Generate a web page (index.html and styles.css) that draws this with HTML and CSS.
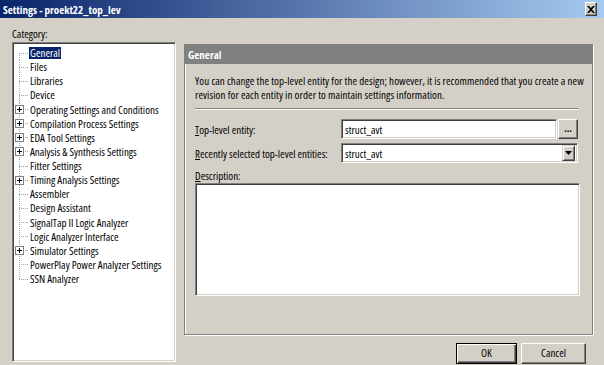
FILE: index.html
```html
<!DOCTYPE html>
<html>
<head>
  <title>Settings - proekt22_top_lev</title>
  <link rel="stylesheet" href="styles.css">
</head>
<body>
  <div class="window">
    <div class="titlebar">
      <span class="title">Settings - proekt22_top_lev</span>
      <div class="close-btn">
        <svg width="8" height="7" viewBox="0 0 8 7">
          <path d="M0 0h2l2 2 2-2h2L5 3.5 8 7H6L4 5 2 7H0l3-3.5z" fill="#000"/>
        </svg>
      </div>
    </div>
    <div class="dialog">
      <div class="left">
        <div class="caption">Category:</div>
        <div class="tree">
          <div class="row first"><span class="twig"></span><span class="label selected">General</span></div>
          <div class="row"><span class="twig"></span><span class="label">Files</span></div>
          <div class="row"><span class="twig"></span><span class="label">Libraries</span></div>
          <div class="row"><span class="twig"></span><span class="label">Device</span></div>
          <div class="row"><span class="twig"><span class="plus"></span></span><span class="label">Operating Settings and Conditions</span></div>
          <div class="row"><span class="twig"><span class="plus"></span></span><span class="label">Compilation Process Settings</span></div>
          <div class="row"><span class="twig"><span class="plus"></span></span><span class="label">EDA Tool Settings</span></div>
          <div class="row"><span class="twig"><span class="plus"></span></span><span class="label">Analysis &amp; Synthesis Settings</span></div>
          <div class="row"><span class="twig"></span><span class="label">Fitter Settings</span></div>
          <div class="row"><span class="twig"><span class="plus"></span></span><span class="label">Timing Analysis Settings</span></div>
          <div class="row"><span class="twig"></span><span class="label">Assembler</span></div>
          <div class="row"><span class="twig"></span><span class="label">Design Assistant</span></div>
          <div class="row"><span class="twig"></span><span class="label">SignalTap II Logic Analyzer</span></div>
          <div class="row"><span class="twig"></span><span class="label">Logic Analyzer Interface</span></div>
          <div class="row"><span class="twig"><span class="plus"></span></span><span class="label">Simulator Settings</span></div>
          <div class="row"><span class="twig"></span><span class="label">PowerPlay Power Analyzer Settings</span></div>
          <div class="row last"><span class="twig"></span><span class="label">SSN Analyzer</span></div>
        </div>
      </div>
      <div class="right">
        <div class="group">
          <div class="group-header">General</div>
          <div class="group-body">
            <p class="intro">You can change the top-level entity for the design; however, it is recommended that you create a new<br>revision for each entity in order to maintain settings information.</p>
            <div class="separator"></div>
            <div class="field">
              <span class="field-label"><u>T</u>op-level entity:</span>
              <div class="textbox">struct_avt</div>
              <div class="browse-btn">...</div>
            </div>
            <div class="field">
              <span class="field-label"><u>R</u>ecently selected top-level entities:</span>
              <div class="combo">
                <span class="combo-text">struct_avt</span>
                <span class="combo-arrow">
                  <svg width="7" height="4" viewBox="0 0 7 4"><path d="M0 0h7L3.5 4z" fill="#000"/></svg>
                </span>
              </div>
            </div>
            <div class="desc-label"><u>D</u>escription:</div>
            <div class="textarea"></div>
          </div>
        </div>
        <div class="buttons">
          <div class="btn default">OK</div>
          <div class="btn cancel">Cancel</div>
        </div>
      </div>
    </div>
  </div>
</body>
</html>
```

FILE: styles.css
```css
:root {
  --face: #d4d0c8;
  --shadow: #808080;
  --dark: #404040;
  --light: #fff;
  --select: #0a246a;
}

body {
  margin: 0;
  padding: 0;
  background: var(--face);
  color: #000;
  font-family: 'Open Sans', 'DejaVu Sans Condensed', sans-serif;
  font-stretch: 75%;
  font-size: 11px;
  overflow: hidden;
}

.window {
  width: 604px;
  height: 365px;
  display: flex;
  flex-direction: column;
  overflow: hidden;
}

.titlebar {
  height: 18px;
  display: flex;
  align-items: center;
  padding-left: 3px;
  background: linear-gradient(to right, #0a246a, #a6caf0);
  color: #fff;
  flex-shrink: 0;
}

.title {
  font-weight: bold;
}

.close-btn {
  margin-left: auto;
  margin-right: 7px;
  width: 10px;
  height: 12px;
  display: flex;
  align-items: center;
  justify-content: center;
  background: var(--face);
  border: 1px solid;
  border-color: var(--light) var(--dark) var(--dark) var(--light);
  box-shadow: inset -1px -1px var(--shadow);
}

.dialog {
  display: flex;
  padding: 9px 0 0 12px;
}

.left {
  width: 164px;
  display: flex;
  flex-direction: column;
}

.caption {
  line-height: 13px;
  height: 13px;
  margin-bottom: 2px;
}

/* sunken white list box */
.tree {
  height: 320px;
  box-sizing: border-box;
  background: #fff;
  border: 1px solid;
  border-color: var(--shadow) var(--light) var(--light) var(--shadow);
  box-shadow: inset 1px 1px var(--dark), inset -1px -1px var(--face);
  padding: 3px 1px 0 1px;
}

.row {
  display: flex;
  align-items: center;
  height: 14.13px;
  white-space: nowrap;
}

.twig {
  width: 15px;
  height: 100%;
  flex-shrink: 0;
  display: flex;
  align-items: center;
  background:
    repeating-linear-gradient(to bottom, #a0a0a0 0 1px, transparent 1px 2px) 5px 0 / 1px 100% no-repeat,
    repeating-linear-gradient(to right, #a0a0a0 0 1px, transparent 1px 2px) 5px 50% / 9px 1px no-repeat;
}

.row.first .twig {
  background:
    repeating-linear-gradient(to bottom, #a0a0a0 0 1px, transparent 1px 2px) 5px 100% / 1px 50% no-repeat,
    repeating-linear-gradient(to right, #a0a0a0 0 1px, transparent 1px 2px) 5px 50% / 9px 1px no-repeat;
}

.row.last .twig {
  background:
    repeating-linear-gradient(to bottom, #a0a0a0 0 1px, transparent 1px 2px) 5px 0 / 1px 50% no-repeat,
    repeating-linear-gradient(to right, #a0a0a0 0 1px, transparent 1px 2px) 5px 50% / 9px 1px no-repeat;
}

.plus {
  width: 7px;
  height: 7px;
  margin-left: 1px;
  border: 1px solid var(--shadow);
  background:
    linear-gradient(#000, #000) center / 5px 1px no-repeat,
    linear-gradient(#000, #000) center / 1px 5px no-repeat,
    #fff;
}

.label {
  padding: 0 1px;
  line-height: 12px;
}

.label.selected {
  background: var(--select);
  color: #fff;
}

.right {
  margin-left: 8px;
  padding-top: 17px;
  width: 409px;
  display: flex;
  flex-direction: column;
}

/* etched frame */
.group {
  height: 291px;
  box-sizing: border-box;
  border: 1px solid var(--shadow);
  box-shadow: inset 1px 1px var(--light), 1px 1px 0 var(--light);
}

.group-header {
  background: var(--shadow);
  color: #fff;
  font-weight: bold;
  height: 19px;
  line-height: 19px;
  padding-left: 3px;
}

.group-body {
  padding: 0 9px 0 10px;
}

.intro {
  margin: 10px 0 0 0;
  line-height: 14px;
  letter-spacing: 0.08px;
  white-space: nowrap;
}

.separator {
  margin-top: 6px;
  height: 1px;
  background: var(--shadow);
  border-bottom: 1px solid var(--light);
  margin-right: 5px;
}

.field {
  display: flex;
  align-items: center;
  margin-top: 4px;
}

.separator + .field {
  margin-top: 9px;
}

.field-label {
  width: 146px;
  flex-shrink: 0;
  white-space: nowrap;
}

.textbox,
.combo {
  height: 20px;
  box-sizing: border-box;
  background: #fff;
  border: 1px solid;
  border-color: var(--shadow) var(--light) var(--light) var(--shadow);
  box-shadow: inset 1px 1px var(--dark), inset -1px -1px var(--face);
  display: flex;
  align-items: center;
  padding-left: 3px;
}

.textbox {
  width: 216px;
}

.browse-btn {
  margin-left: 1px;
  width: 20px;
  height: 20px;
  box-sizing: border-box;
  border: 1px solid;
  border-color: var(--light) var(--dark) var(--dark) var(--light);
  box-shadow: inset -1px -1px var(--shadow);
  text-align: center;
  line-height: 16px;
  font-weight: bold;
  font-size: 10px;
}

.combo {
  width: 237px;
  padding-right: 2px;
}

.combo-text {
  flex: 1;
}

.combo-arrow {
  width: 13px;
  height: 16px;
  box-sizing: border-box;
  border: 1px solid;
  border-color: var(--face) var(--dark) var(--dark) var(--face);
  box-shadow: inset 1px 1px var(--light), inset -1px -1px var(--shadow);
  background: var(--face);
  display: flex;
  align-items: center;
  justify-content: center;
}

.desc-label {
  margin-top: 6px;
  line-height: 13px;
}

.textarea {
  margin-top: 1px;
  width: 385px;
  height: 113px;
  box-sizing: border-box;
  background: #fff;
  border: 1px solid;
  border-color: var(--shadow) var(--light) var(--light) var(--shadow);
  box-shadow: inset 1px 1px var(--dark), inset -1px -1px var(--face);
}

.buttons {
  display: flex;
  justify-content: flex-end;
  gap: 4px;
  margin-top: 8px;
  margin-right: 7px;
}

.btn {
  height: 21px;
  box-sizing: border-box;
  text-align: center;
  line-height: 17px;
  border: 1px solid;
  border-color: var(--light) var(--dark) var(--dark) var(--light);
  box-shadow: inset -1px -1px var(--shadow);
}

.btn.default {
  width: 61px;
  border-color: #000;
  box-shadow: inset 1px 1px var(--light), inset -1px -1px var(--dark), inset -2px -2px var(--shadow);
}

.btn.cancel {
  width: 65px;
}
```
